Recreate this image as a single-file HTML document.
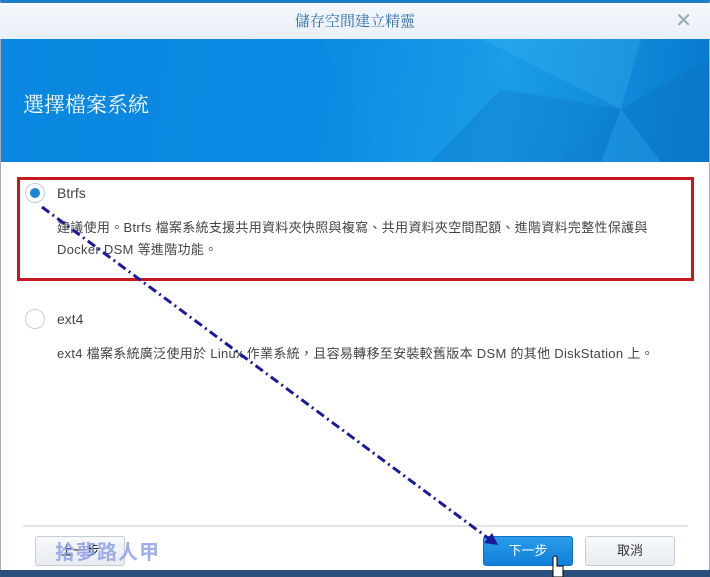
<!DOCTYPE html>
<html><head><meta charset="utf-8"><style>
*{margin:0;padding:0;box-sizing:border-box}
body{width:710px;height:577px;overflow:hidden;background:#fff;font-family:"Liberation Sans","Noto Sans CJK TC",sans-serif;position:relative}
.win{position:absolute;left:0;top:0;width:710px;height:570px;border-top:3px solid #1a7fc8;border-left:1px solid #aab;border-right:1px solid #aab;background:#fff}
.title{position:absolute;left:0;right:0;top:3px;height:36px;background:linear-gradient(#f4f8fc,#e9f0f7);text-align:center;line-height:36px;color:#2f6fae;font-size:15px;font-family:"Noto Serif CJK SC",serif}
.x{position:absolute;right:18px;top:3px;line-height:36px;color:#9aa;font-size:20px}
.banner{position:absolute;left:1px;right:1px;top:39px;height:123px;background:linear-gradient(100deg,#0a87e0 0%,#0a8ae2 45%,#1a9ee8 70%,#0678cc 100%);overflow:hidden}
.banner h1{position:absolute;left:22px;top:50px;color:#fff;font-size:21px;font-weight:normal;font-family:"Noto Serif CJK SC",serif}
.lbl{position:absolute;font-size:14px;color:#444}
.desc{position:absolute;font-size:13px;color:#444;line-height:22px;letter-spacing:0.3px}
.radio{position:absolute;width:20px;height:20px;border-radius:50%;border:1px solid #ccd}
.btn{position:absolute;top:536px;height:30px;width:90px;border:1px solid #c8ccd2;border-radius:3px;background:linear-gradient(#f7f9fb,#e8ecf0);text-align:center;line-height:28px;font-size:13px;color:#333}
</style></head><body>
<div class="win"></div>
<div class="title">儲存空間建立精靈</div>
<div class="x">✕</div>
<div class="banner">
<svg width="708" height="123" style="position:absolute;left:0;top:0">
<polygon points="320,0 460,0 560,123 380,123" fill="#1b97e6" opacity=".2"/>
<polygon points="480,0 640,0 620,70" fill="#40b4f0" opacity=".3"/>
<polygon points="620,70 708,20 708,123 560,123" fill="#0d74c6" opacity=".45"/>
<polygon points="500,50 620,70 560,123 430,123" fill="#0b6fc2" opacity=".3"/>
<polygon points="620,70 660,123 600,123" fill="#2aa8ec" opacity=".4"/>
</svg>
<h1>選擇檔案系統</h1></div>
<div style="position:absolute;left:17px;top:177px;width:677px;height:104px;border:3px solid #c8171e"></div>
<div class="radio" style="left:25px;top:183px;border-color:#bcd"><div style="position:absolute;left:4px;top:4px;width:10px;height:10px;border-radius:50%;background:#1a86d8"></div></div>
<div class="lbl" style="left:57px;top:185px">Btrfs</div>
<div class="desc" style="left:57px;top:217px">建議使用。Btrfs 檔案系統支援共用資料夾快照與複寫、共用資料夾空間配額、進階資料完整性保護與<br>Docker DSM 等進階功能。</div>
<div class="radio" style="left:25px;top:309px"></div>
<div class="lbl" style="left:57px;top:311px">ext4</div>
<div class="desc" style="left:57px;top:343px">ext4 檔案系統廣泛使用於 Linux 作業系統，且容易轉移至安裝較舊版本 DSM 的其他 DiskStation 上。</div>
<div style="position:absolute;left:23px;top:525px;width:665px;height:2px;background:#e3e6ea"></div>
<div class="btn" style="left:35px;color:#222">上一步</div>
<div style="position:absolute;left:55px;top:536px;font-size:20px;color:#8fa0e8;font-weight:bold;letter-spacing:1px;opacity:.85">拾夢路人甲</div>
<div class="btn" style="left:483px;background:linear-gradient(#2a9bea,#1180d8);border-color:#1172c4;color:#fff">下一步</div>
<div class="btn" style="left:585px">取消</div>
<div style="position:absolute;left:0;top:570px;width:710px;height:7px;background:#2b4f7a"></div>
<svg width="710" height="577" style="position:absolute;left:0;top:0">
<line x1="42" y1="207" x2="492" y2="541" stroke="#1a1a9a" stroke-width="3" stroke-dasharray="9,4,2,4"/>
<polygon points="498,545 484,543 492,533" fill="#1a1a9a"/>
<path d="M553 577 V558 a2 2 0 0 1 4 0 V566 h6 v11z" fill="#fff" stroke="#000"/>
</svg>
</body></html>
